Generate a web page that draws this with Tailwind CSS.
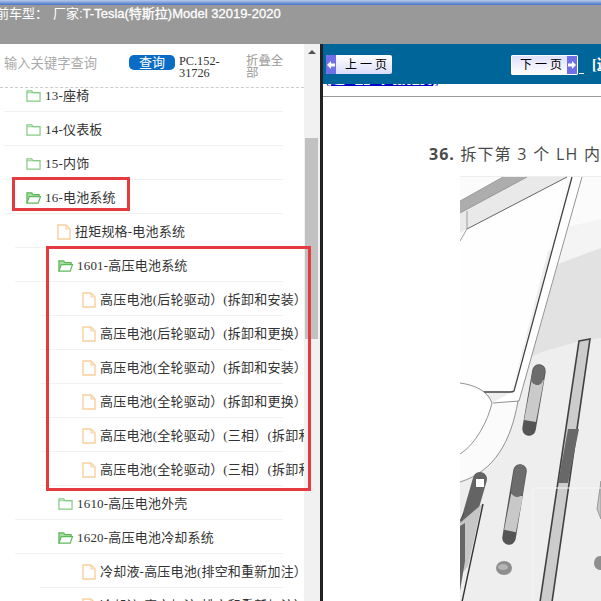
<!doctype html>
<html lang="zh">

<head>
  <meta charset="UTF-8" />
  <meta name="viewport" content="width=device-width, initial-scale=1.0" />
  <script src="https://cdn.jsdelivr.net/npm/@tailwindcss/browser@4"></script>
  <title>Manual</title>
</head>

<body class="relative w-[601px] h-[601px] overflow-hidden bg-white font-['Liberation_Serif','Noto_Sans_CJK_SC',serif]">
  <!-- icons -->
  <svg class="hidden">
    <symbol id="folder" viewBox="0 0 16 14">
      <path d="M1 12.5V1.5h5l1.5 2H15v9z" fill="#fff" stroke="#84cc84" stroke-width="1.3" />
      <path d="M1 3.5h14" stroke="#84cc84" stroke-width="1" />
    </symbol>
    <symbol id="folder-open" viewBox="0 0 16 14">
      <path d="M1 12.5V1.5h5l1.5 2H14v2" fill="#a8dca0" stroke="#5cb85c" stroke-width="1.3" />
      <path d="M1 12.5l2.500-7H15.500l-2.500 7z" fill="#fff" stroke="#5cb85c" stroke-width="1.300" />
    </symbol>
    <symbol id="file" viewBox="0 0 14 16">
      <path d="M1 1h8l4 4v10H1z" fill="#fff" stroke="#f8cf9f" stroke-width="1.400" />
      <path d="M9 1v4h4" fill="none" stroke="#f8cf9f" stroke-width="1.100" />
    </symbol>
    <symbol id="arrow-left" viewBox="0 0 10 10">
      <path d="M1 5l4-4v2.500h4v3H5V9z" fill="#fff" />
    </symbol>
    <symbol id="arrow-right" viewBox="0 0 10 10">
      <path d="M9 5L5 1v2.500H1v3h4V9z" fill="#fff" />
    </symbol>
  </svg>

  <!-- top bar -->
  <header class="h-[44px] bg-[#999999] overflow-hidden">
    <div class="h-[5px] bg-gradient-to-b from-[#b9cbec] to-[#4a72c6]"></div>
    <p class="-ml-[4px] h-[18px] whitespace-nowrap text-[13px] leading-[17px] text-white font-['Liberation_Sans','Noto_Sans_CJK_SC',sans-serif]">前车型：<span class="ml-[5px]">厂家:</span><span class="[-webkit-text-stroke:0.3px_white]">T-Tesla(特斯拉)Model 32019-2020</span></p>
  </header>

  <div class="flex h-[557px]">
    <!-- left tree -->
    <aside class="flex w-[320px] shrink-0">
      <div class="w-[304px] flex flex-col overflow-hidden">
        <div class="flex h-[44px] shrink-0 items-start border-b border-dashed border-[#cccccc] pl-[4px] pt-[11px]">
          <span class="w-[125px] shrink-0 text-[13.300px] leading-[18px] text-[#aaaaaa] font-['Liberation_Sans','Noto_Sans_CJK_SC',sans-serif]">输入关键字查询</span>
          <span class="flex h-[15px] w-[46px] shrink-0 items-center justify-center rounded-[5px] bg-[#0a6cc4] text-[13px] text-white font-['Liberation_Sans','Noto_Sans_CJK_SC',sans-serif]">查询</span>
          <span class="ml-[4px] w-[58px] shrink-0 text-[12.300px] leading-[12px] text-[#333333]">PC.152-<br>31726</span>
          <span class="ml-[9px] mt-[0px] w-[38px] shrink-0 text-[12.400px] leading-[12px] pt-[0px] text-[#999999]">折叠全部</span>
        </div>

        <div class="-mt-[10px] text-[13px] text-[#333333] tracking-[0.2px]">
          <div class="ml-[4px] mr-[21px] flex h-[34px] items-center gap-[4px] border-b border-[#f2f2f2] pl-[22px] pt-[2px]"><svg class="h-[14px] w-[15px]"><use href="#folder" /></svg>13-座椅</div>
          <div class="ml-[4px] mr-[21px] flex h-[34px] items-center gap-[4px] border-b border-[#f2f2f2] pl-[22px] pt-[2px]"><svg class="h-[14px] w-[15px]"><use href="#folder" /></svg>14-仪表板</div>
          <div class="ml-[4px] mr-[21px] flex h-[34px] items-center gap-[4px] border-b border-[#f2f2f2] pl-[22px] pt-[2px]"><svg class="h-[14px] w-[15px]"><use href="#folder" /></svg>15-内饰</div>
          <div class="ml-[4px] mr-[21px] flex h-[34px] items-center gap-[4px] border-b border-[#f2f2f2] pl-[22px] pt-[2px]"><svg class="h-[14px] w-[15px]"><use href="#folder-open" /></svg>16-电池系统</div>

          <div class="ml-[15px] mr-[21px] flex h-[34px] items-center gap-[4px] border-b border-[#f2f2f2] pl-[42px] pt-[2px]"><svg class="h-[16px] w-[14px]"><use href="#file" /></svg>扭矩规格-电池系统</div>
          <div class="ml-[15px] mr-[21px] flex h-[34px] items-center gap-[4px] border-b border-[#f2f2f2] pl-[43px] pt-[2px]"><svg class="h-[14px] w-[15px]"><use href="#folder-open" /></svg>1601-高压电池系统</div>

          <div class="ml-[40px] mr-[21px] flex h-[34px] items-center gap-[4px] whitespace-nowrap border-b border-[#f2f2f2] pl-[42px] pt-[2px]"><svg class="h-[16px] w-[14px] shrink-0"><use href="#file" /></svg>高压电池(后轮驱动）(拆卸和安装）</div>
          <div class="ml-[40px] mr-[21px] flex h-[34px] items-center gap-[4px] whitespace-nowrap border-b border-[#f2f2f2] pl-[42px] pt-[2px]"><svg class="h-[16px] w-[14px] shrink-0"><use href="#file" /></svg>高压电池(后轮驱动）(拆卸和更换）</div>
          <div class="ml-[40px] mr-[21px] flex h-[34px] items-center gap-[4px] whitespace-nowrap border-b border-[#f2f2f2] pl-[42px] pt-[2px]"><svg class="h-[16px] w-[14px] shrink-0"><use href="#file" /></svg>高压电池(全轮驱动）(拆卸和安装）</div>
          <div class="ml-[40px] mr-[21px] flex h-[34px] items-center gap-[4px] whitespace-nowrap border-b border-[#f2f2f2] pl-[42px] pt-[2px]"><svg class="h-[16px] w-[14px] shrink-0"><use href="#file" /></svg>高压电池(全轮驱动）(拆卸和更换）</div>
          <div class="ml-[40px] mr-[21px] flex h-[34px] items-center gap-[4px] whitespace-nowrap border-b border-[#f2f2f2] pl-[42px] pt-[2px]"><svg class="h-[16px] w-[14px] shrink-0"><use href="#file" /></svg>高压电池(全轮驱动）(三相）(拆卸和安装）</div>
          <div class="ml-[40px] mr-[21px] flex h-[34px] items-center gap-[4px] whitespace-nowrap border-b border-[#f2f2f2] pl-[42px] pt-[2px]"><svg class="h-[16px] w-[14px] shrink-0"><use href="#file" /></svg>高压电池(全轮驱动）(三相）(拆卸和更换）</div>

          <div class="ml-[15px] mr-[21px] flex h-[34px] items-center gap-[4px] border-b border-[#f2f2f2] pl-[43px] pt-[2px]"><svg class="h-[14px] w-[15px]"><use href="#folder" /></svg>1610-高压电池外壳</div>
          <div class="ml-[15px] mr-[21px] flex h-[34px] items-center gap-[4px] border-b border-[#f2f2f2] pl-[43px] pt-[2px]"><svg class="h-[14px] w-[15px]"><use href="#folder-open" /></svg>1620-高压电池冷却系统</div>
          <div class="ml-[40px] mr-[21px] flex h-[34px] items-center gap-[4px] whitespace-nowrap border-b border-[#f2f2f2] pl-[42px] pt-[2px]"><svg class="h-[16px] w-[14px] shrink-0"><use href="#file" /></svg>冷却液-高压电池(排空和重新加注）</div>
          <div class="ml-[40px] mr-[21px] flex h-[34px] items-center gap-[4px] whitespace-nowrap border-b border-[#f2f2f2] pl-[42px] pt-[2px]"><svg class="h-[16px] w-[14px] shrink-0"><use href="#file" /></svg>冷却液-真空加注(排空和重新加注）</div>
        </div>
      </div>

      <!-- scrollbar -->
      <div class="w-[16px] bg-[#f1f1f1] pt-[6px]">
        <div class="mx-auto h-0 w-0 border-x-[4px] border-b-[4px] border-x-transparent border-b-[#505050]"></div>
        <div class="ml-[1px] mt-[84px] h-[201px] w-[13px] bg-[#c1c1c1]"></div>
      </div>
    </aside>

    <!-- right content -->
    <main class="flex-1 min-w-0 overflow-hidden border-l-[3px] border-[#222222]">
      <div class="flex h-[40px] items-start overflow-hidden bg-[#006699] pt-[11px] whitespace-nowrap">
        <span class="ml-[3px] flex h-[19px] w-[66px] shrink-0 items-center rounded-[2px] bg-gradient-to-b from-[#ffffff] to-[#dcdcfa] text-[12px] text-black">
          <span class="flex h-full w-[10px] items-center justify-center rounded-l-[2px] bg-[#6f6fe8]"><svg class="h-[10px] w-[10px]"><use href="#arrow-left" /></svg></span>
          <span class="ml-[9px]">上 一 页</span>
        </span>
        <span class="ml-[119px] flex h-[20px] w-[67px] shrink-0 items-center rounded-[1px] border border-white bg-gradient-to-b from-[#dfdffa] to-[#ffffff] text-[12px] text-black">
          <span class="ml-[8px]">下 一 页</span>
          <span class="ml-auto flex h-full w-[10px] items-center justify-center bg-[#6f6fe8]"><svg class="h-[10px] w-[10px]"><use href="#arrow-right" /></svg></span>
        </span>
        <span class="ml-[1px] mt-[18px] h-px w-[5px] shrink-0 bg-white"></span>
        <span class="ml-[8px] shrink-0 text-[14px] font-bold leading-[19px] text-white underline">[返回</span>
      </div>
      <div class="h-[13px] overflow-hidden border-b border-[#999999]">
        <p class="ml-[3px] -mt-[12px] text-[13px] leading-[15px] text-[#0000cc] underline whitespace-nowrap">[返回车型目录列表]</p>
      </div>

      <h2 class="ml-[106px] mt-[47px] whitespace-nowrap text-[16px] leading-[20px] tracking-[1px] [word-spacing:0.6px] text-[#4a4a4a] font-['Open_Sans','Noto_Sans_CJK_SC',sans-serif]"><b>36.</b> 拆下第 3 个 LH 内饰板</h2>

      <!-- repair photo -->
      <svg class="ml-[137px] mt-[12px] block h-[426px] w-[141px]" viewBox="460 175 141 426">
        <rect x="460" y="175" width="141" height="426" fill="#eeeeee" />
        <!-- top band above the panel -->
        <path d="M460 176H601V250L460 250z" fill="#fbfbfb" />
        <path d="M460 200L503 176H567L467 228L460 232z" fill="#e9e9e9" />
        <path d="M460 200L503 176H527L460 212z" fill="#adadad" />
        <path d="M460 200L503 176M460 212L527 176" stroke="#8a8a8a" fill="none" stroke-width="0.700" />
        <path d="M567 226L601 218V247L558 263z" fill="#f4f4f4" />
        <path d="M558 263L601 247V337L580 340L545 350L533 355H521z" fill="#e2e2e2" />

        <!-- white panel and strip -->
        <path d="M467 228L567 176L512 390H483L460 382V240z" fill="#fefefe" />
        <path d="M572 176H583L519 400L515 400L492 402L512 391z" fill="#ffffff" />
        <path d="M460 382L483 391L492 402C488 420 475 444 460 453z" fill="#ffffff" />
        <path d="M460 453C475 444 488 420 492 402L518 400C510 440 495 470 460 481z" fill="#fbfbfb" />
        <path d="M467 228L567 176" stroke="#555555" stroke-width="0.900" fill="none" />
        <path d="M572 176L514 390C513 391 512 391 510 391H484" stroke="#444444" stroke-width="1.300" fill="none" />
        <path d="M582 176L519 400L493 402" stroke="#777777" stroke-width="0.800" fill="none" />
        <path d="M460 382C475 384 488 390 492 402C488 420 475 444 460 453M460 481C495 470 511 440 518 400" fill="none" stroke="#7a7a7a" stroke-width="0.800" />
        <path d="M460 240L467 228V210" stroke="#888888" fill="none" stroke-width="0.800" />

        <!-- slots -->
        <path d="M539 370L529 428" stroke="#555555" stroke-width="13.500" stroke-linecap="round" />
        <path d="M538 378L530 420" stroke="#cacaca" stroke-width="12" />
        <path d="M539 370L537 378" stroke="#6c6c6c" stroke-width="12" stroke-linecap="round" />
        <path d="M520 470L509 537" stroke="#555555" stroke-width="13.500" stroke-linecap="round" />
        <path d="M517 494L510 530" stroke="#c8c8c8" stroke-width="12" />
        <path d="M520 470L517 490" stroke="#6c6c6c" stroke-width="12" stroke-linecap="round" />

        <!-- long rail -->
        <path d="M579 340L590 338L552 601H540z" fill="#cccccc" stroke="#404040" stroke-width="1.600" />
        <path d="M568 428L579 428L568 482L558 482z" fill="#686868" />

        <!-- left slot and square -->
        <path d="M480 478L465 530" stroke="#646464" stroke-width="14" stroke-linecap="round" />
        <path d="M482 503L460 522V575L468 565z" fill="#c6c6c6" />
        <path d="M483 503L462 601" stroke="#333333" stroke-width="1.400" fill="none" />
        <path d="M460 520L464 512" stroke="#444444" stroke-width="1" />
        <path d="M460 601V525L465 522V560L460 590z" fill="#666666" />
        <rect x="476" y="478" width="8" height="8" fill="#ffffff" />

        <ellipse cx="504" cy="567" rx="8" ry="7" fill="#8e8e8e" />
        <ellipse cx="503" cy="566" rx="5" ry="3" fill="#b5b5b5" />
        <ellipse cx="600" cy="562" rx="6" ry="7" fill="#8e8e8e" />
        <path d="M601 480L597 508L601 518z" fill="#c6c6c6" stroke="#999999" />
        <path d="M533 487H601M533 487V601" stroke="#f7f7f7" fill="none" />
      </svg>
    </main>
  </div>

  <!-- red highlight boxes drawn on the screenshot -->
  <div class="absolute left-[12px] top-[177px] h-[34px] w-[118px] border-[3px] border-[#e53a40]"></div>
  <div class="absolute left-[46px] top-[246px] h-[245px] w-[265px] border-[3px] border-[#e53a40]"></div>
</body>

</html>
